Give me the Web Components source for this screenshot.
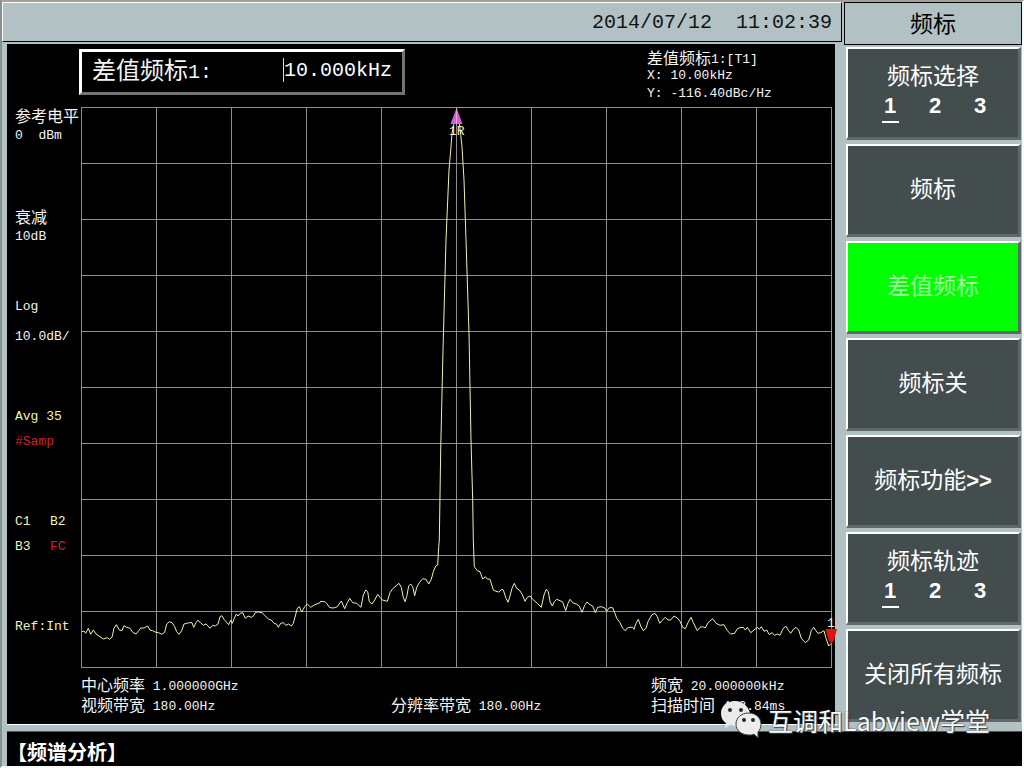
<!DOCTYPE html>
<html lang="zh-CN">
<head>
<meta charset="utf-8">
<title>频谱分析</title>
<style>
  body { margin: 0; background: #000; }
</style>
</head>
<body>
<analyzer-app></analyzer-app>

<template id="tpl-app">
  <style>
    :host {
      display: grid; box-sizing: border-box; position: relative;
      grid-template-columns: minmax(0, 1fr) 180px;
      grid-template-rows: minmax(0, 1fr) 35px;
      min-height: 100vh; background: #b1c1c4;
      border: 2px solid #fbfbfb; border-top-color: #a39f9c; border-left-color: #869290;
      font-family: "Liberation Mono", "Noto Sans CJK SC", monospace;
      color: #f4f4f4;
    }
    .left { display: grid; grid-template-rows: 40px minmax(0, 1fr) 7px; }
    header {
      display: flex; align-items: center; justify-content: flex-end;
      border: 1px solid #fff; border-right-color: #000; border-bottom-color: #000;
      padding-right: 9px; color: #101414; font-size: 20px; white-space: pre;
    }
    .screen-wrap { padding: 2px 7px 0 5px; display: grid; }
    .rail { margin-left: 5px; border-top: 1px solid #fff; box-sizing: border-box; }
    footer {
      grid-column: 1 / -1; margin-left: 5px; background: #000; border-top: 1px solid #50595a; box-sizing: border-box;
      display: flex; align-items: center; padding-top: 4px;
      font: bold 20px "Noto Sans CJK SC", sans-serif; color: #fff;
    }
    water-mark { position: absolute; right: 32px; bottom: 26px; }
  </style>
  <div class="left">
    <header><time datetime="2014-07-12T11:02:39">2014/07/12  11:02:39</time></header>
    <div class="screen-wrap"><spectrum-screen></spectrum-screen></div>
    <div class="rail"></div>
  </div>
  <soft-menu heading="频标">
    <soft-key label="频标选择" options="1 2 3"></soft-key>
    <soft-key label="频标"></soft-key>
    <soft-key label="差值频标" active></soft-key>
    <soft-key label="频标关"></soft-key>
    <soft-key label="频标功能&gt;&gt;"></soft-key>
    <soft-key label="频标轨迹" options="1 2 3"></soft-key>
    <soft-key label="关闭所有频标"></soft-key>
  </soft-menu>
  <footer>【频谱分析】</footer>
  <water-mark>互调和Labview学堂</water-mark>
</template>

<template id="tpl-menu">
  <style>
    :host { display: grid; grid-template-rows: 43px minmax(0, 1fr); padding: 0 0 9px 2px; }
    h1 {
      margin: 0; border: 1px solid #000; display: flex; align-items: center; justify-content: center;
      font: 23px "Noto Sans CJK SC", sans-serif; color: #000; box-sizing: border-box; padding-bottom: 4px;
    }
    nav { display: grid; grid-auto-rows: minmax(0, 1fr); row-gap: 4px; padding: 2px 1px 0 2px; }
  </style>
  <h1></h1>
  <nav><slot></slot></nav>
</template>

<template id="tpl-key">
  <style>
    :host { display: grid; min-height: 70px; }
    button {
      appearance: none; margin: 0; padding: 0; cursor: pointer; border-style: solid;
      border-width: 2px 3px 3px 2px; border-color: #fff #5f686a #5f686a #fff;
      background: #434d4e; color: #fff; font: 23px/30px "Liberation Sans", "Noto Sans CJK SC", sans-serif;
      display: flex; flex-direction: column; align-items: center; justify-content: center;
      padding-bottom: 2px;
    }
    :host([active]) button { background: #00ff00; color: #a4f6a4; }
    b { font-size: 22px; }
    .options { display: grid; grid-template-columns: repeat(3, 17px); column-gap: 28px; font-weight: bold; font-size: 22px; line-height: 30px; padding-left: 4px; }
    .options span { border-bottom: 2px solid transparent; }
    .options span:first-child { border-bottom-color: #fff; }
  </style>
  <button type="button"></button>
</template>

<template id="tpl-screen">
  <style>
    :host {
      display: grid; background: #000; font-size: 13px;
      grid-template: 63px minmax(0, 1fr) 56px / 74px minmax(0, 1fr);
      padding-right: 3px;
    }
    i { font: 16px "Noto Sans CJK SC", sans-serif; line-height: 16px; vertical-align: -1px; }
    .top { grid-column: 1 / -1; display: flex; justify-content: space-between; align-items: flex-start; padding: 5px 0 0 72px; }
    .entry {
      display: flex; align-items: center; box-sizing: border-box; width: 326px; height: 46px;
      border: 3px solid #fff; border-right-color: #737373; border-bottom-color: #737373;
      padding: 0 9px 4px 10px; font-size: 20px;
    }
    .entry label { flex: 1; }
    .entry i { font-size: 24px; line-height: 24px; }
    input {
      appearance: none; background: none; border: 0; border-left: 1px solid #ddd; border-radius: 0; outline: 0;
      margin: 0; padding: 0; width: 109px; height: 24px; color: #fff; font: 20px "Liberation Mono", monospace;
    }
    .marker { width: 185px; line-height: 18px; }
    .marker p { margin: 0; height: 18px; white-space: pre; }
    .side { padding-left: 8px; line-height: 16px; display: flex; flex-direction: column; align-items: flex-start; }
    .side div { display: grid; row-gap: 5px; margin-bottom: 64px; }
    .side div.close { margin-bottom: 54px; }
    .side div.wide { row-gap: 14px; }
    .side div.mid { row-gap: 9px; }
    .side span { height: 16px; white-space: pre; }
    .side i { display: block; }
    .pairs { grid-template-columns: 35px auto; }
    .y { color: #f3f0b4; }
    .r { color: #d0202c; }
    .foot { grid-column: 2; display: grid; grid-template-columns: 310fr 260fr 181fr; grid-auto-rows: 20px; padding-top: 8px; line-height: 20px; }
  </style>
  <div class="top">
    <div class="entry">
      <label for="delta"><i>差值频标</i>1:</label>
      <input id="delta" value="10.000kHz">
    </div>
    <div class="marker">
      <p><i>差值频标</i>1:[T1]</p>
      <p>X: 10.00kHz</p>
      <p>Y: -116.40dBc/Hz</p>
    </div>
  </div>
  <div class="side">
    <div><span><i>参考电平</i></span><span>0  dBm</span></div>
    <div class="close"><span><i>衰减</i></span><span>10dB</span></div>
    <div class="wide"><span>Log</span><span>10.0dB/</span></div>
    <div class="mid"><span class="y">Avg 35</span><span class="r">#Samp</span></div>
    <div class="mid pairs y"><span>C1</span><span>B2</span><span>B3</span><span class="r">FC</span></div>
    <span class="y">Ref:Int</span>
  </div>
  <spectrum-trace></spectrum-trace>
  <div class="foot">
    <span><i>中心频率</i> 1.000000GHz</span><span></span><span><i>频宽</i> 20.000000kHz</span>
    <span><i>视频带宽</i> 180.00Hz</span><span><i>分辨率带宽</i> 180.00Hz</span><span><i>扫描时间</i> 463.84ms</span>
  </div>
</template>

<template id="tpl-trace">
  <style>
    :host { display: block; min-width: 0; }
    svg { display: block; width: 100%; height: 100%; overflow: visible; }
    .grid { stroke: #8e8e90; fill: none; shape-rendering: crispEdges; }
    .trace { stroke: #f2f0b0; fill: none; }
    text { font: 13px "Liberation Mono", monospace; fill: #f3f0d0; }
  </style>
  <svg viewBox="81 107 751 561" role="img" aria-label="频谱">
    <path class="grid"/>
    <polyline class="trace"/>
    <path d="M456.500 108L462.500 124H450.500Z" fill="#d45fd0"/>
    <path d="M456.500 108V124" stroke="#e9a0e6" stroke-width="1"/>
    <text x="449" y="135">1R</text>
    <text x="827" y="627">1</text>
    <path d="M825.500 629H837L834 640L831.500 644L828.500 640Z" fill="#e01414"/>
  </svg>
</template>

<template id="tpl-mark">
  <style>
    :host {
      display: flex; align-items: center; column-gap: 4px; pointer-events: none;
      font: 25px/38px "Noto Sans CJK SC", sans-serif; color: #f8fafa; white-space: nowrap;
      text-shadow: 1px 1px 1px #394141, 0 0 2px #394141;
    }
    svg { display: block; }
  </style>
  <svg width="44" height="40" viewBox="0 0 44 40" aria-hidden="true">
    <path d="M15 1C7 1 1 6 1 13C1 18 3 21 6 23L5 28L10 25C13 26 15 26 17 26L30 13C28 6 23 1 15 1Z" fill="#e9eaea"/>
    <path d="M29 13C21 13 16 18 16 24C16 31 22 35 29 35C31 35 33 35 34 34L38 38L38 32C40 30 41 27 41 24C41 18 36 13 29 13Z" fill="#ededed" stroke="#3a3f40" stroke-width="1"/>
    <g fill="#252a2b"><circle cx="10" cy="10" r="2"/><circle cx="21" cy="10" r="2"/><circle cx="24" cy="20" r="2"/><circle cx="33" cy="20" r="2"/></g>
  </svg>
  <slot></slot>
</template>

<script>
  class TemplateElement extends HTMLElement {
    constructor(id) {
      super();
      this.attachShadow({ mode: "open" }).append(document.getElementById(id).content.cloneNode(true));
    }
  }

  // Sweep samples by segment: origin, then x,y pairs in thirds of a unit.
  const SWEEP = [
    [70, 540, "36,275 42,273 47,280 55,265 62,283 70,270 78,282 90,290 100,297 112,293 118,298 126,292 132,265 139,254 148,270 156,272 162,257 170,262 180,265 188,277 198,282 204,275 212,264 222,264 233,258 240,270 248,272 255,276 266,278 275,283 284,277 290,252 298,245 306,248 314,260 320,275 327,283 335,272 342,252 350,250 358,248 366,248 371,262 378,248 383,241 392,248 400,256 408,252 414,258 420,265 428,256 436,258 444,252 450,230 455,227 462,238 468,245 476,254 482,240 487,250 493,235 499,222 504,228 511,220 518,218 526,235 534,228 544,232 552,226 556,217 566,216 576,218 584,226 596,238 604,240 612,250 620,253 625,262 632,250 640,248 648,256 656,252 664,258 670,250 676,228 682,205 688,200 695,216 704,200 712,192 722,202 735,194 750,188"],
    [290, 540, "92,184 104,185 110,190 118,202 126,204 134,203 142,200 154,183 164,206 172,188 179,175 188,188 200,190 213,202 220,165 227,150 233,155 238,185 246,192 254,180 263,163 270,172 277,180 292,184 300,158 308,146 318,138 327,130 334,142 340,172 345,185 350,170 356,138 362,132 368,140 374,167 380,142 388,128 398,116 408,118 416,132 424,118 430,95 437,78 443,75 446,20 448,0"],
    [0, 0, "1322,1350 1329,1050 1338,720 1347,510 1353,440 1356,400 1362,370 1368,345 1374,345 1380,385 1386,440 1392,540 1398,720 1407,1000 1413,1320 1418,1500"],
    [450, 540, "70,0 73,80 82,92 90,95 98,117 106,110 112,117 120,118 130,150 138,154 146,156 156,148 160,150 168,175 174,187 180,168 186,145 193,130 200,145 208,150 216,162 225,184 232,172 240,168 248,178 262,190 274,202 282,165 289,148 295,155 300,185 307,198 313,185 320,178 330,182 338,186 347,212 354,190 360,178 368,188 380,193 388,198 396,217 404,196 411,186 420,194 428,198 436,218 443,202 454,200 464,204 470,214 478,203 488,203 494,218 500,235 510,248 518,265 526,272 532,264 540,262 548,262 552,268 558,250 565,238 572,258 580,272 588,265 594,245"],
    [640, 590, "30,84 36,74 45,70 52,80 59,100 66,92 76,82 84,90 92,90 102,78 112,84 120,94 128,112 136,116 144,98 153,82 160,98 172,122 180,112 188,110 196,114 204,98 218,86 228,100 240,106 252,104 262,122 272,132 284,130 292,116 300,113 310,112 316,120 322,112 332,128 342,120 352,112 358,118 364,110 372,124 380,120 388,134 396,128 404,136 412,132 420,136 428,118 437,108 446,122 452,130 460,118 468,112 476,120 484,145 496,158 506,150 514,122 521,112 528,122 534,130 542,128 552,122 558,145 566,168 574,160"]
  ];

  customElements.define("spectrum-trace", class extends TemplateElement {
    constructor() {
      super("tpl-trace");
      let grid = "";
      for (let i = 0; i <= 10; i++) {
        grid += `M${81.5 + 75 * i} 107V668M81 ${107.5 + 56 * i}H832`;
      }
      this.shadowRoot.querySelector(".grid").setAttribute("d", grid);
      const points = SWEEP.flatMap(([ox, oy, list]) => list.split(" ").map(pair => {
        const [x, y] = pair.split(",").map(Number);
        return `${(ox + x / 3).toFixed(1)},${(oy + y / 3).toFixed(1)}`;
      }));
      this.shadowRoot.querySelector(".trace").setAttribute("points", points.join(" "));
    }
  });

  customElements.define("spectrum-screen", class extends TemplateElement {
    constructor() { super("tpl-screen"); }
  });

  customElements.define("soft-key", class extends TemplateElement {
    constructor() { super("tpl-key"); }
    connectedCallback() {
      const button = this.shadowRoot.querySelector("button");
      const label = document.createElement("span");
      const [, name, arrows] = this.getAttribute("label").match(/^([^>]*)(>*)$/);
      label.append(name);
      if (arrows) {
        const b = document.createElement("b");
        b.textContent = arrows;
        label.append(b);
      }
      button.replaceChildren(label);
      if (this.hasAttribute("active")) button.setAttribute("aria-pressed", "true");
      if (this.hasAttribute("options")) {
        const row = document.createElement("span");
        row.className = "options";
        for (const option of this.getAttribute("options").split(" ")) {
          const item = document.createElement("span");
          item.textContent = option;
          row.append(item);
        }
        button.append(row);
      }
    }
  });

  customElements.define("soft-menu", class extends TemplateElement {
    constructor() { super("tpl-menu"); }
    connectedCallback() {
      this.shadowRoot.querySelector("h1").textContent = this.getAttribute("heading");
    }
  });

  customElements.define("water-mark", class extends TemplateElement {
    constructor() { super("tpl-mark"); }
  });

  customElements.define("analyzer-app", class extends TemplateElement {
    constructor() { super("tpl-app"); }
  });
</script>
</body>
</html>
